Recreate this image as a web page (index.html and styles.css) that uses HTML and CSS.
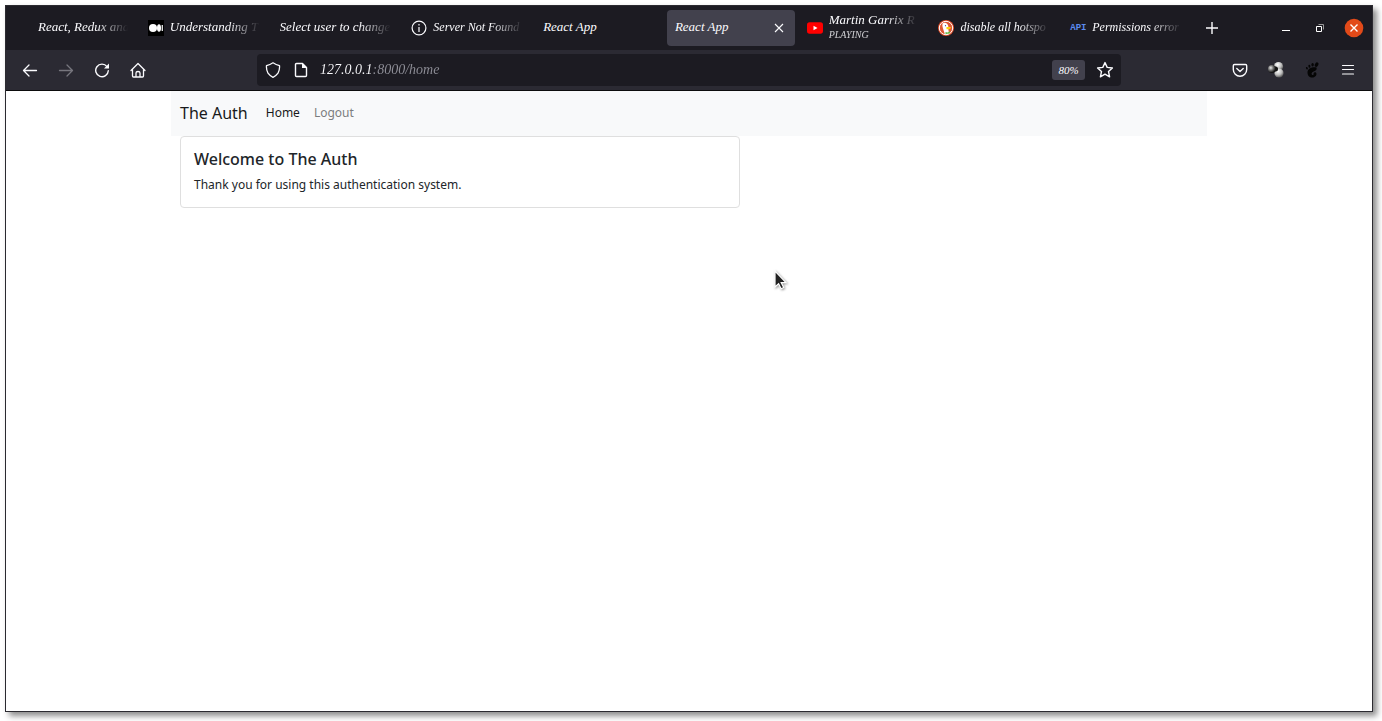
FILE: index.html
```html
<!DOCTYPE html>
<html lang="en">
<head>
<meta charset="utf-8">
<meta name="viewport" content="width=device-width, initial-scale=1">
<title>React App</title>
<link rel="stylesheet" href="styles.css">
</head>
<body>
<div class="window">
  <header class="tab-bar">
    <div class="tabs">
      <div class="tab"><button class="tab-button"><span class="favicon"></span><span class="tab-label fade">React, Redux and</span></button></div>
      <div class="tab"><button class="tab-button">
        <svg class="favicon" viewBox="0 0 16 16"><rect width="16" height="16" fill="#000"/><circle cx="5" cy="8" r="4" fill="#fff"/><ellipse cx="11" cy="8" rx="2" ry="3.8" fill="#fff"/><rect x="13.6" y="5" width="1.4" height="6" fill="#ddd"/></svg>
        <span class="tab-label fade">Understanding T</span></button></div>
      <div class="tab"><button class="tab-button"><span class="tab-label fade">Select user to change</span></button></div>
      <div class="tab"><button class="tab-button">
        <svg class="favicon" viewBox="0 0 16 16" fill="none" stroke="#fbfbfe" stroke-width="1.2"><circle cx="8" cy="8" r="6.9"/><path d="M8 7v5M8 4v1.5"/></svg>
        <span class="tab-label compact fade">Server Not Found</span></button></div>
      <div class="tab"><button class="tab-button"><span class="tab-label">React App</span></button></div>
      <div class="tab active"><button class="tab-button"><span class="tab-label">React App</span></button>
        <button class="tab-close" aria-label="Close tab"><svg width="16" height="16" viewBox="0 0 16 16" fill="none" stroke="#fbfbfe" stroke-width="1.1"><path d="M4 4l8 8M12 4l-8 8"/></svg></button></div>
      <div class="tab"><button class="tab-button">
        <svg class="favicon" viewBox="0 0 16 16"><rect x="0" y="2.3" width="16" height="11.4" rx="2.6" fill="#f00"/><path d="M6.5 5.7v4.6l4-2.3z" fill="#fff"/></svg>
        <span class="tab-label fade">Martin Garrix R<small class="tab-status">PLAYING</small></span></button></div>
      <div class="tab"><button class="tab-button">
        <svg class="favicon" viewBox="0 0 16 16"><circle cx="8" cy="8" r="8" fill="#de4a26"/><circle cx="8" cy="8" r="6.700" fill="#de5833" stroke="#fff" stroke-width="1"/><path d="M4.500 3.500Q7 1.800 9.500 4.200 11 6 10.300 9l.7 4.500Q9 14.800 6.800 14L5 8.500Q4 5.500 4.500 3.500z" fill="#fff"/><path d="M8.500 7h4l.5 1-2 1.300H8.500z" fill="#fdd20a"/><path d="M7.500 12l2 .4 2.500-1.200v2.300l-2.500.3-2 .5z" fill="#65bc46"/><circle cx="7.500" cy="5.700" r=".6" fill="#2d4f8e"/></svg>
        <span class="tab-label compact fade">disable all hotspo</span></button></div>
      <div class="tab"><button class="tab-button"><span class="favicon api-icon">API</span><span class="tab-label compact fade">Permissions error</span></button></div>
    </div>
    <button class="icon-button" aria-label="New tab"><svg width="16" height="16" viewBox="0 0 16 16" fill="none" stroke="#fbfbfe" stroke-width="1.400"><path d="M8 2v12M2 8h12"/></svg></button>
    <div class="window-controls">
      <button class="control" aria-label="Minimize"><svg width="16" height="16" viewBox="0 0 16 16"><path d="M4 10h8v1H4z" fill="#fff"/></svg></button>
      <button class="control" aria-label="Restore"><svg width="16" height="16" viewBox="0 0 16 16" fill="none"><path d="M6.500 4.500h5v5" stroke="#999"/><path d="M4.500 6.500h5v5h-5z" stroke="#fff"/></svg></button>
      <button class="control" aria-label="Close window"><svg width="20" height="20" viewBox="0 0 20 20"><circle cx="10" cy="10" r="9.300" fill="#e24a19"/><path d="M6.500 6.500l7 7M13.500 6.500l-7 7" stroke="#fff" stroke-width="1.400"/></svg></button>
    </div>
  </header>
  <div class="toolbar">
    <nav class="button-group" aria-label="Browser navigation">
      <button class="icon-button" aria-label="Back"><svg width="16" height="16" viewBox="0 0 16 16" fill="none" stroke="#fbfbfe" stroke-width="1.300" stroke-linecap="round" stroke-linejoin="round"><path d="M14.500 8.500H1.500M7 3L1.500 8.500 7 14"/></svg></button>
      <button class="icon-button" aria-label="Forward" disabled><svg width="16" height="16" viewBox="0 0 16 16" fill="none" stroke="#77767e" stroke-width="1.300" stroke-linecap="round" stroke-linejoin="round"><path d="M1.500 8.500h13M9 3l5.500 5.500L9 14"/></svg></button>
      <button class="icon-button" aria-label="Reload"><svg width="16" height="16" viewBox="0 0 16 16" fill="none" stroke="#fbfbfe" stroke-width="1.400" stroke-linecap="round"><path d="M13 4.600A6.300 6.300 0 1 0 14.300 8.800"/><path d="M15 1.500v5h-5z" fill="#fbfbfe" stroke="none"/></svg></button>
      <button class="icon-button" aria-label="Home"><svg width="16" height="16" viewBox="0 0 16 16" fill="none" stroke="#fbfbfe" stroke-width="1.300" stroke-linecap="round" stroke-linejoin="round"><path d="M1 8.500L8 1.500l7 7M2.500 7.500V14q0 1 1 1h9q1 0 1-1V7.500M6 15v-4q0-1.500 2-1.500t2 1.500v4"/></svg></button>
    </nav>
    <div class="url-bar">
      <button class="url-icon" aria-label="Tracking protection"><svg width="16" height="16" viewBox="0 0 16 16" fill="none" stroke="#fbfbfe" stroke-width="1.300" stroke-linejoin="round"><path d="M8 .8q3 2 6.500 2.800.4 4.400-1.500 7.600Q11 14 8 15.300 5 14 3 11.200 1.100 8 1.500 3.600 5 2.800 8 .8z"/></svg></button>
      <button class="url-icon" aria-label="Site information"><svg width="16" height="16" viewBox="0 0 16 16" fill="none" stroke="#fbfbfe" stroke-width="1.400" stroke-linejoin="round"><path d="M9.500 1.500h-6q-1 0-1 1v11q0 1 1 1h9q1 0 1-1V5.500z"/><path d="M9 1v5h5z" fill="#fbfbfe" stroke="none"/></svg></button>
      <input class="url-input" type="text" aria-label="Address" value="127.0.0.1:8000/home">
      <button class="zoom-level">80%</button>
      <button class="url-icon" aria-label="Bookmark this page"><svg width="18" height="18" viewBox="0 0 18 18" fill="none" stroke="#fbfbfe" stroke-width="1.400" stroke-linejoin="round"><path d="M9 1.600l2.200 4.800 5.200.6-3.900 3.500 1.100 5.300L9 13.200l-4.600 2.600 1.100-5.300L1.600 7l5.200-.6z"/></svg></button>
    </div>
    <div class="button-group">
      <button class="icon-button" aria-label="Pocket"><svg width="16" height="16" viewBox="0 0 16 16" fill="none" stroke="#fbfbfe" stroke-width="1.400" stroke-linecap="round" stroke-linejoin="round"><path d="M2.500 2.500h11q1.200 0 1.200 1.200V7.500a6.700 6.700 0 0 1-13.400 0V3.700q0-1.200 1.200-1.200zM4.800 6.500L8 9.500l3.200-3"/></svg></button>
      <button class="icon-button" aria-label="Molecule extension"><svg width="18" height="18" viewBox="0 0 18 18">
        <defs><radialGradient id="light" cx=".4" cy=".3" r=".7"><stop offset="0" stop-color="#fff"/><stop offset=".6" stop-color="#bbb"/><stop offset="1" stop-color="#555"/></radialGradient><radialGradient id="dark" cx=".35" cy=".35" r=".6"><stop offset="0" stop-color="#eee"/><stop offset=".5" stop-color="#777"/><stop offset="1" stop-color="#151515"/></radialGradient></defs>
        <circle cx="11.500" cy="5.500" r="4.600" fill="url(#light)"/><circle cx="12" cy="12" r="4.600" fill="url(#light)"/><circle cx="8.500" cy="8" r="2.500" fill="#151515"/><circle cx="5" cy="8" r="4" fill="url(#dark)"/></svg></button>
      <button class="icon-button" aria-label="GNOME Shell integration"><svg width="16" height="16" viewBox="0 0 16 16" fill="#050505"><path d="M12.500 5.500C9 4.500 3.500 6 3.500 10.500c0 3 2 5 4.700 5 2.600 0 4.600-2 4.200-4-.3-1.600-2.200-1.600-2.700-.4-.3.900.2 1.400-.5 1.900-.9.400-1.800-.5-1.600-1.500C8 9 13.800 9.500 12.500 5.500z"/><ellipse cx="12.600" cy="2.600" rx="1.700" ry="2.400" transform="rotate(25 12.600 2.600)"/><ellipse cx="8.600" cy="2.800" rx="1.200" ry="1.800"/><ellipse cx="5.400" cy="4.300" rx="1" ry="1.500" transform="rotate(-15 5.400 4.300)"/><ellipse cx="2.900" cy="6.200" rx=".9" ry="1.300" transform="rotate(-25 2.900 6.200)"/></svg></button>
      <button class="icon-button" aria-label="Application menu"><svg width="16" height="16" viewBox="0 0 16 16" fill="none" stroke="#fbfbfe" stroke-width="1.200" stroke-linecap="round"><path d="M2.500 3.500h11M2.500 7.500h11M2.500 12h11"/></svg></button>
    </div>
  </div>
  <main class="page">
    <div class="container">
      <nav class="navbar">
        <a class="brand" href="#">The Auth</a>
        <a class="nav-link current" href="#">Home</a>
        <a class="nav-link" href="#">Logout</a>
      </nav>
      <section class="card">
        <h1 class="card-title">Welcome to The Auth</h1>
        <p class="card-text">Thank you for using this authentication system.</p>
      </section>
    </div>
  </main>
</div>
<svg class="pointer" width="16" height="24" viewBox="0 0 16 24"><path d="M2 2v16l3.600-3.300 2.500 5 2.600-1.200-2.500-4.900H13z" fill="#222" stroke="#fff" stroke-width="1.200"/></svg>
</body>
</html>
```
FILE: styles.css
```css
* { box-sizing: border-box; }

body {
  margin: 0;
  padding: 5px 9px 9px 5px;
  background: #fff;
  font-family: "Noto Sans", "Open Sans", sans-serif;
}

button {
  margin: 0;
  padding: 0;
  border: 0;
  background: none;
  color: inherit;
  font: inherit;
}

svg { display: block; flex: none; }

.window {
  display: flex;
  flex-direction: column;
  min-height: calc(100vh - 14px);
  border: 1px solid #2b2a30;
  background: #fff;
  box-shadow: 4px 4px 6px rgba(0, 0, 0, 0.45);
}

.tab-bar,
.toolbar {
  color: #fbfbfe;
  font-family: "Liberation Serif", serif;
  font-size: 13px;
  font-style: italic;
}

.tab-bar {
  display: flex;
  align-items: center;
  height: 44px;
  padding: 0 8px 0 2px;
  background: #1c1b22;
}

.tabs {
  display: flex;
  flex: 1;
  gap: 4px;
  min-width: 0;
  margin-right: 4px;
}

.tab {
  display: flex;
  flex: 1 1 0;
  align-items: center;
  min-width: 0;
  height: 36px;
  padding: 0 8px;
  border-radius: 4px;
}

.tab.active { background: #42414d; }

.tab-button {
  display: flex;
  flex: 1;
  align-items: center;
  gap: 6px;
  min-width: 0;
  height: 100%;
  text-align: left;
}

.favicon { flex: none; width: 16px; height: 16px; }

.api-icon {
  color: #5b8bf0;
  font: bold 9px/16px "Liberation Mono", monospace;
}

.tab-label {
  flex: 1;
  overflow: hidden;
  padding-bottom: 2px;
  line-height: 16px;
  white-space: nowrap;
}

.compact { font-size: 12px; }

.fade {
  -webkit-mask-image: linear-gradient(to left, transparent, #000 32px);
  mask-image: linear-gradient(to left, transparent, #000 32px);
}

.tab-status {
  display: block;
  font-size: 10px;
  line-height: 14px;
  opacity: 0.8;
}

.icon-button {
  display: flex;
  flex: none;
  align-items: center;
  justify-content: center;
  width: 36px;
  height: 36px;
}

.window-controls {
  display: flex;
  gap: 14px;
  margin-left: 46px;
}

.control {
  display: flex;
  align-items: center;
  justify-content: center;
  width: 20px;
  height: 20px;
}

.toolbar {
  display: flex;
  align-items: center;
  height: 41px;
  padding: 0 6px;
  border-bottom: 1px solid #0c0c0d;
  background: #2b2a33;
}

.button-group { display: flex; flex: none; }

.url-bar {
  display: flex;
  flex: 1;
  align-items: center;
  min-width: 0;
  height: 32px;
  margin: 0 101px;
  padding: 0 2px;
  border-radius: 4px;
  background: #1c1b22;
}

.url-icon {
  display: flex;
  flex: none;
  align-items: center;
  justify-content: center;
  width: 28px;
  height: 28px;
}

.url-input {
  flex: 1;
  min-width: 0;
  padding: 0 5px;
  border: 0;
  outline: 0;
  background: linear-gradient(to right, #fbfbfe 57px, #8f8f98 57px);
  -webkit-background-clip: text;
  background-clip: text;
  color: transparent;
  font: italic 14px/20px "Liberation Serif", serif;
}

.zoom-level {
  width: 33px;
  height: 20px;
  margin-right: 6px;
  border-radius: 3px;
  background: #42414d;
  font-size: 11px;
}

.page { flex: 1; }

.container {
  max-width: 1036px;
  margin: 0 auto;
}

.navbar {
  display: flex;
  align-items: center;
  height: 45px;
  padding: 0 9px 2px;
  background: #f8f9fa;
  font-size: 12px;
}

.brand {
  margin-right: 18px;
  color: #18191b;
  font-size: 16px;
  text-decoration: none;
}

.nav-link {
  margin-right: 14px;
  color: #7c7d7e;
  text-decoration: none;
}

.nav-link.current { color: #18191b; }

.card {
  max-width: 560px;
  margin: 0 9px;
  padding: 12px 13px;
  border: 1px solid #dfdfdf;
  border-radius: 4px;
  background: #fff;
  color: #212529;
}

.card-title {
  margin: 0 0 6px;
  font-size: 16px;
  font-weight: 500;
  line-height: 20px;
}

.card-text {
  margin: 0;
  font-size: 12px;
  line-height: 20px;
}

.pointer {
  position: absolute;
  top: 269px;
  left: 773px;
  filter: drop-shadow(1px 1px 1px rgba(0, 0, 0, 0.4));
}
```
